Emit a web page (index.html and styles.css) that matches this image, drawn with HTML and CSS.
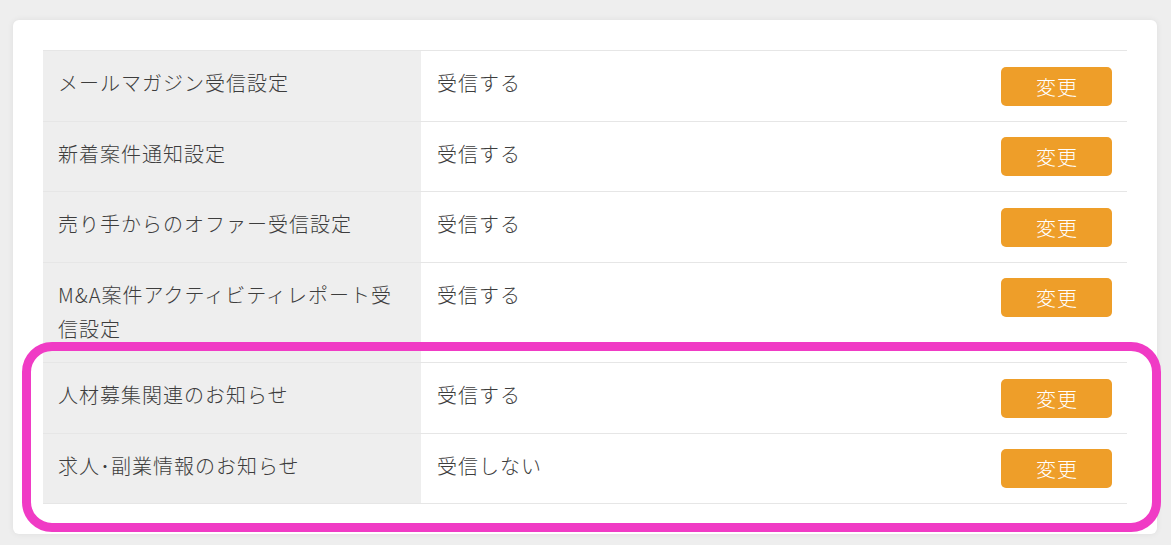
FILE: index.html
```html
<!DOCTYPE html>
<html lang="ja">
<head>
<meta charset="utf-8">
<title>通知設定</title>
<link rel="stylesheet" href="styles.css">
</head>
<body>
<div class="page">
  <div class="card">
    <table class="settings">
      <tr>
        <th>メールマガジン受信設定</th>
        <td class="value">受信する</td>
        <td class="action"><button class="btn">変更</button></td>
      </tr>
      <tr>
        <th>新着案件通知設定</th>
        <td class="value">受信する</td>
        <td class="action"><button class="btn">変更</button></td>
      </tr>
      <tr>
        <th>売り手からのオファー受信設定</th>
        <td class="value">受信する</td>
        <td class="action"><button class="btn">変更</button></td>
      </tr>
      <tr>
        <th>M&amp;A案件アクティビティレポート受信設定</th>
        <td class="value">受信する</td>
        <td class="action"><button class="btn">変更</button></td>
      </tr>
      <tr>
        <th>人材募集関連のお知らせ</th>
        <td class="value">受信する</td>
        <td class="action"><button class="btn">変更</button></td>
      </tr>
      <tr>
        <th>求人･副業情報のお知らせ</th>
        <td class="value">受信しない</td>
        <td class="action"><button class="btn">変更</button></td>
      </tr>
    </table>
  </div>
  <div class="highlight"></div>
</div>
</body>
</html>
```

FILE: styles.css
```css
html, body {
  margin: 0;
  padding: 0;
  background: #eeeeee;
}

body {
  font-family: "Noto Sans CJK JP", "Noto Sans", sans-serif;
  color: #3d3d3d;
}

.page {
  position: relative;
  padding: 20px 14px 10px 13px;
}

.card {
  background: #ffffff;
  border-radius: 6px;
  box-shadow: 0 0 6px rgba(0, 0, 0, 0.07);
  padding: 30px;
}

.settings {
  width: 100%;
  border-collapse: collapse;
  border-top: 1px solid #e6e6e6;
}

.settings tr {
  border-bottom: 1px solid #e6e6e6;
}

.settings th,
.settings td {
  font-size: 20px;
  letter-spacing: 1px;
  line-height: 34.75px;
  font-weight: 300;
  vertical-align: top;
  text-align: left;
  padding: 15px 0 15px 16px;
}

.settings th {
  width: 348px;
  background: #eeeeee;
  padding-left: 15px;
  padding-right: 15px;
}

.settings td.action {
  width: 111px;
  padding-top: 15.5px;
  padding-left: 0;
  padding-right: 15px;
}

.btn {
  display: block;
  width: 111px;
  height: 39px;
  border: none;
  border-radius: 5px;
  background: #ee9e29;
  color: #ffffff;
  font-family: inherit;
  font-size: 20px;
  font-weight: 300;
  letter-spacing: 1px;
  text-indent: 1px;
  line-height: 39px;
  padding: 0;
  cursor: pointer;
}

.highlight {
  position: absolute;
  left: 22px;
  top: 342px;
  width: 1139px;
  height: 190px;
  box-sizing: border-box;
  border: 9px solid #f03bc5;
  border-radius: 30px;
  pointer-events: none;
}
```
